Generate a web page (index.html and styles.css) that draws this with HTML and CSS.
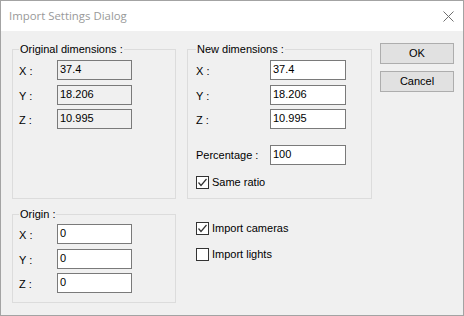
FILE: index.html
```html
<!DOCTYPE html>
<html>
<head>
<meta charset="utf-8">
<link rel="stylesheet" href="styles.css">
</head>
<body>
<div class="window">
  <div class="titlebar">
    <span class="title">Import Settings Dialog</span>
    <svg class="close" width="11" height="11" viewBox="0 0 11 11"><path d="M0.5 0.5 L10.5 10.5 M10.5 0.5 L0.5 10.5" stroke="#6f6f6f" stroke-width="1" fill="none"/></svg>
  </div>
  <div class="body">
    <div class="top">
      <fieldset class="group orig">
        <legend>Original dimensions :</legend>
        <div class="rows">
          <div class="row"><span class="lbl">X :</span><div class="tb ro">37.4</div></div>
          <div class="row"><span class="lbl">Y :</span><div class="tb ro">18.206</div></div>
          <div class="row"><span class="lbl">Z :</span><div class="tb ro">10.995</div></div>
        </div>
      </fieldset>
      <fieldset class="group newdim">
        <legend>New dimensions :</legend>
        <div class="rows">
          <div class="row"><span class="lbl">X :</span><div class="tb">37.4</div></div>
          <div class="row"><span class="lbl">Y :</span><div class="tb">18.206</div></div>
          <div class="row"><span class="lbl">Z :</span><div class="tb">10.995</div></div>
          <div class="row pct"><span class="lbl">Percentage :</span><div class="tb">100</div></div>
          <div class="check same"><span class="box"><svg width="11" height="11" viewBox="0 0 11 11"><path d="M1.5 5.5 L4 8.5 L9.5 2" stroke="#333" stroke-width="1.2" fill="none"/></svg></span><span class="ctext">Same ratio</span></div>
        </div>
      </fieldset>
      <div class="buttons">
        <div class="btn">OK</div>
        <div class="btn">Cancel</div>
      </div>
    </div>
    <div class="bottom">
      <fieldset class="group origin">
        <legend>Origin :</legend>
        <div class="rows">
          <div class="row"><span class="lbl">X :</span><div class="tb">0</div></div>
          <div class="row"><span class="lbl">Y :</span><div class="tb">0</div></div>
          <div class="row"><span class="lbl">Z :</span><div class="tb">0</div></div>
        </div>
      </fieldset>
      <div class="opts">
        <div class="check"><span class="box"><svg width="11" height="11" viewBox="0 0 11 11"><path d="M1.5 5.5 L4 8.5 L9.5 2" stroke="#333" stroke-width="1.2" fill="none"/></svg></span><span class="ctext">Import cameras</span></div>
        <div class="check"><span class="box"></span><span class="ctext">Import lights</span></div>
      </div>
    </div>
  </div>
</div>
</body>
</html>
```
FILE: styles.css
```css
html, body {
  margin: 0;
  padding: 0;
  background: #f0f0f0;
}
.window {
  width: 464px;
  height: 316px;
  box-sizing: border-box;
  border: 1px solid #a3a3a3;
  background: #f0f0f0;
  font-family: "Liberation Sans", Arial, sans-serif;
  font-size: 11px;
  line-height: 13px;
  color: #000;
  display: flex;
  flex-direction: column;
}
.titlebar {
  height: 30px;
  flex: none;
  background: #fff;
  display: flex;
  align-items: center;
  justify-content: space-between;
  padding: 0 9px 0 8px;
}
.title {
  font-family: "Segoe UI", "Open Sans", "Noto Sans", sans-serif;
  font-size: 11.4px;
  color: #999;
  margin-top: -1px;
}
.close {
  display: block;
  margin-top: 1px;
}
.body {
  flex: 1;
  padding: 12px 0 0 11px;
}
.top {
  display: flex;
  height: 156px;
}
.group {
  margin: 0;
  border: 1px solid #dcdcdc;
  padding: 0 6px;
  box-sizing: border-box;
  min-width: 0;
}
.group legend {
  padding: 0 1px;
  font-size: 11px;
  line-height: 13px;
}
.orig {
  width: 164px;
}
.newdim {
  width: 185px;
  margin-left: 11px;
  padding-left: 8px;
}
.rows {
  padding-top: 4px;
  display: flex;
  flex-direction: column;
}
.row {
  display: flex;
  align-items: flex-start;
  height: 20px;
}
.row + .row {
  margin-top: 4.5px;
}
.lbl {
  width: 38px;
  margin-top: 5px;
  white-space: nowrap;
}
.newdim .lbl {
  width: 74px;
}
.newdim .row.pct {
  margin-top: 16px;
}
.newdim .pct .lbl {
  margin-top: 4px;
}
.tb {
  width: 75px;
  height: 20px;
  box-sizing: border-box;
  border: 1px solid #7a7a7a;
  background: #fff;
  padding: 2px 2px;
  white-space: nowrap;
}
.newdim .tb {
  width: 76px;
}
.tb.ro {
  background: #f0f0f0;
}
.check {
  display: flex;
  align-items: flex-start;
  height: 13px;
}
.check.same {
  margin-top: 11px;
}
.box {
  width: 13px;
  height: 13px;
  box-sizing: border-box;
  border: 1px solid #333;
  background: #fff;
  flex: none;
  display: flex;
  align-items: center;
  justify-content: center;
}
.box svg {
  display: block;
}
.ctext {
  margin-left: 3px;
  white-space: nowrap;
}
.buttons {
  margin-left: 8px;
  display: flex;
  flex-direction: column;
  gap: 7px;
}
.btn {
  width: 74px;
  height: 21px;
  box-sizing: border-box;
  border: 1px solid #adadad;
  background: #e1e1e1;
  display: flex;
  align-items: center;
  justify-content: center;
}
.bottom {
  display: flex;
  margin-top: 9px;
}
.origin {
  width: 164px;
  height: 95px;
}
.origin .rows {
  padding-top: 3px;
}
.opts {
  margin-left: 11px;
  padding-left: 9px;
  padding-top: 14px;
  display: flex;
  flex-direction: column;
  gap: 13px;
}
```
